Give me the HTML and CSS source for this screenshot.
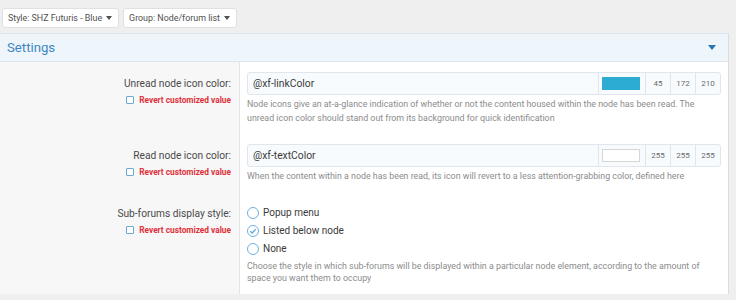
FILE: index.html
```html
<!DOCTYPE html>
<html>
<head>
<meta charset="utf-8">
<link rel="stylesheet" href="styles.css">
</head>
<body>
<div class="page">
  <div class="toolbar">
    <button class="menu-btn">Style: SHZ Futuris - Blue <span class="caret"></span></button>
    <button class="menu-btn">Group: Node/forum list <span class="caret"></span></button>
  </div>
  <div class="block">
    <div class="block-header">
      <span class="block-title">Settings</span>
      <span class="header-caret"></span>
    </div>
    <div class="block-body">
      <div class="row">
        <div class="label-col">
          <div class="label">Unread node icon color:</div>
          <div class="revert"><span class="check"></span>Revert customized value</div>
        </div>
        <div class="field-col">
          <div class="input-group">
            <div class="input-text">@xf-linkColor</div>
            <div class="swatch-cell"><span class="swatch swatch-blue"></span></div>
            <div class="num">45</div>
            <div class="num">172</div>
            <div class="num">210</div>
          </div>
          <div class="explain">Node icons give an at-a-glance indication of whether or not the content housed within the node has been read. The unread icon color should stand out from its background for quick identification</div>
        </div>
      </div>
      <div class="row">
        <div class="label-col">
          <div class="label">Read node icon color:</div>
          <div class="revert"><span class="check"></span>Revert customized value</div>
        </div>
        <div class="field-col">
          <div class="input-group">
            <div class="input-text">@xf-textColor</div>
            <div class="swatch-cell"><span class="swatch swatch-white"></span></div>
            <div class="num">255</div>
            <div class="num">255</div>
            <div class="num">255</div>
          </div>
          <div class="explain">When the content within a node has been read, its icon will revert to a less attention-grabbing color, defined here</div>
        </div>
      </div>
      <div class="row row-radio">
        <div class="label-col">
          <div class="label">Sub-forums display style:</div>
          <div class="revert"><span class="check"></span>Revert customized value</div>
        </div>
        <div class="field-col">
          <ul class="radios">
            <li><span class="radio"></span>Popup menu</li>
            <li><span class="radio radio-on"><svg viewBox="0 0 12 12" width="12" height="12"><path d="M3.3 6.2 L5.2 8 L8.7 4.3" fill="none" stroke="#5fa9dc" stroke-width="1.3"/></svg></span>Listed below node</li>
            <li><span class="radio"></span>None</li>
          </ul>
          <div class="explain">Choose the style in which sub-forums will be displayed within a particular node element, according to the amount of space you want them to occupy</div>
        </div>
      </div>
    </div>
  </div>
</div>
</body>
</html>
```
FILE: styles.css
```css
* { box-sizing: border-box; }
html, body { margin: 0; padding: 0; }
body {
  background: #efefef;
  font-family: "Roboto", "Open Sans", sans-serif;
  color: #333;
  width: 736px;
  height: 300px;
  overflow: hidden;
}
.page { width: 736px; }
.toolbar {
  display: flex;
  gap: 4px;
  padding: 8px 0 0 2px;
  height: 33px;
}
.menu-btn {
  font-family: inherit;
  font-size: 8.9px;
  color: #505050;
  background: #fff;
  border: 1px solid #e0e0e0;
  border-radius: 3px;
  height: 20px;
  padding: 0 6px 0 5px;
  display: flex;
  align-items: center;
  gap: 4px;
}
.caret {
  display: inline-block;
  width: 0; height: 0;
  border-left: 3.5px solid transparent;
  border-right: 3.5px solid transparent;
  border-top: 4px solid #505050;
}
.block {
  width: 729px;
  background: #fff;
  border-top: 1px solid #dde6ee;
  border-right: 1px solid #dcdcdc;
}
.block-header {
  height: 28px;
  background: #eef6fc;
  border-bottom: 1px solid #dde6ee;
  display: flex;
  align-items: center;
  justify-content: space-between;
  padding: 0 12px 0 7px;
}
.block-title {
  font-size: 13.2px;
  color: #3f86c0;
}
.header-caret {
  width: 0; height: 0;
  border-left: 4.5px solid transparent;
  border-right: 4.5px solid transparent;
  border-top: 5px solid #2577b1;
}
.block-body { background: #fff; }
.row {
  display: grid;
  grid-template-columns: 240px 1fr;
}
.label-col {
  background: #f7f7f7;
  border-right: 1px solid #e4e4e4;
  padding: 10px 8px 0 0;
  text-align: right;
}
.label {
  font-size: 10.2px;
  color: #4a4a4a;
  height: 23px;
  line-height: 23px;
}
.revert {
  font-size: 8.3px;
  font-weight: 700;
  color: #e0303a;
  display: flex;
  justify-content: flex-end;
  align-items: center;
  gap: 5px;
  margin-top: 0;
}
.check {
  width: 8px; height: 8px;
  border: 1px solid #6ea8d8;
  background: #fff;
  border-radius: 1px;
}
.field-col {
  padding: 10px 7px 9px 7px;
}
.input-group {
  display: flex;
  height: 23px;
  border: 1px solid #e1e6ec;
  border-radius: 3px;
  background: #f8fbfe;
}
.input-text {
  flex: 1;
  font-size: 10.3px;
  color: #3a3a3a;
  line-height: 21px;
  padding-left: 5px;
}
.swatch-cell {
  width: 47px;
  border-left: 1px solid #e1e6ec;
  display: flex;
  align-items: center;
  padding-left: 3px;
}
.swatch {
  width: 38px;
  height: 13px;
  display: block;
}
.swatch-blue { background: #2dacd2; }
.swatch-white { background: #fff; border: 1px solid #d6d6d6; }
.num {
  width: 25px;
  border-left: 1px solid #e1e6ec;
  font-size: 8px;
  color: #6a6a6a;
  text-align: center;
  line-height: 21px;
}
.explain {
  font-size: 8.85px;
  color: #8c8c8c;
  line-height: 13.5px;
  margin-top: 3px;
}
.row-radio .field-col { padding-top: 11px; }
.row-radio .label-col { padding-top: 9px; }
.radios {
  list-style: none;
  margin: 0;
  padding: 0;
}
.radios li {
  display: flex;
  align-items: center;
  gap: 4px;
  height: 18px;
  font-size: 10px;
  color: #3a3a3a;
}
.radio {
  width: 12px; height: 12px;
  border: 1px solid #6eb0de;
  border-radius: 50%;
  background: #fff;
  position: relative;
  display: inline-block;
}
.radio-on svg { position: absolute; left: -1px; top: -1px; }
.row-radio .explain { margin-top: 2px; line-height: 12.5px; }
```
